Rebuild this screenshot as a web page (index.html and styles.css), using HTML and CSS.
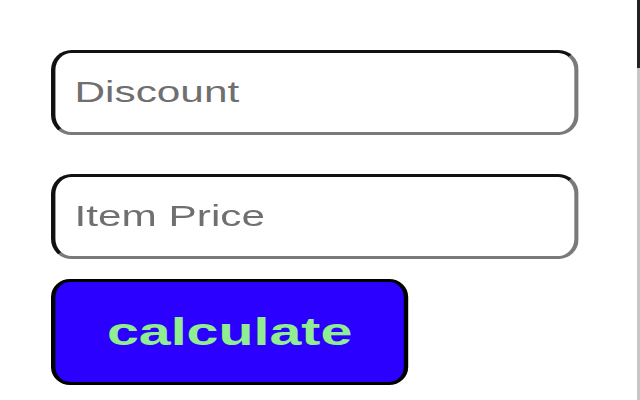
FILE: index.html
```html
<!DOCTYPE html>
<html>
<head>
<meta charset="utf-8">
<link rel="stylesheet" href="styles.css">
</head>
<body>
<main class="page">
  <form class="calc">
    <input class="field" type="text" placeholder="Discount">
    <input class="field field-price" type="text" placeholder="Item Price">
    <button class="calc-btn" type="button">calculate</button>
  </form>
</main>
<div class="scrollbar"></div>
</body>
</html>
```
FILE: styles.css
```css
html, body {
  margin: 0;
  padding: 0;
  background: #fff;
}
body {
  width: 640px;
  height: 400px;
  overflow: hidden;
  display: flex;
  font-family: "Liberation Sans", Arial, sans-serif;
}
.page {
  flex: 1;
  min-width: 0;
  padding-top: 50px;
  padding-left: 51px;
  overflow: hidden;
}
.calc {
  width: max-content;
  display: flex;
  flex-direction: column;
  align-items: flex-start;
  transform: scaleX(1.47);
  transform-origin: 0 0;
}
.field {
  box-sizing: border-box;
  width: 359px;
  height: 85px;
  margin: 0;
  padding: 0 0 0 13px;
  border-style: solid;
  border-width: 3px;
  border-color: #111 #7a7a7a #7a7a7a #111;
  border-radius: 14px / 20px;
  background: #fff;
  font-family: "Liberation Sans", Arial, sans-serif;
  font-size: 28.8px;
  color: #222;
  outline: none;
}
.field::placeholder {
  color: #6f6f6f;
}
.field-price {
  margin-top: 39px;
}
.calc-btn {
  box-sizing: border-box;
  margin-top: 20px;
  width: 243px;
  height: 106px;
  padding: 0;
  border: 3px solid #000;
  border-radius: 13px / 18px;
  background: #2b00ff;
  color: #90ee90;
  font-family: "Liberation Sans", Arial, sans-serif;
  font-weight: bold;
  font-size: 39px;
}
.scrollbar {
  width: 3px;
  height: 400px;
  background: linear-gradient(#222 0, #222 68px, #c6c6c6 68px, #c6c6c6 100%);
}
```
